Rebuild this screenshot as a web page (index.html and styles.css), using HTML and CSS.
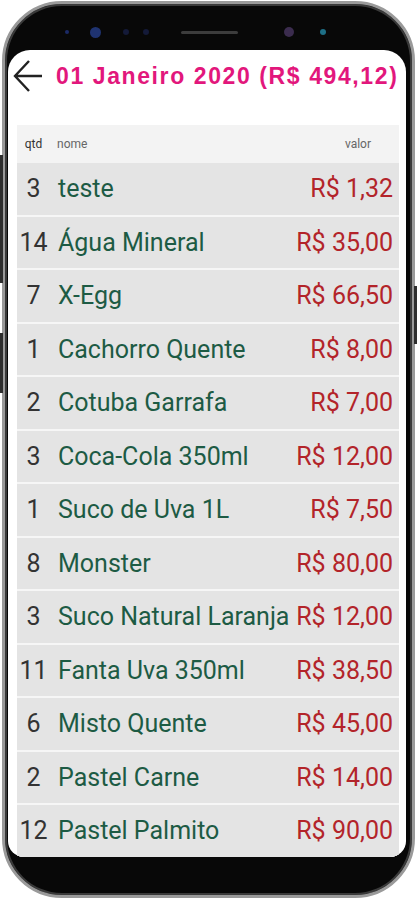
FILE: index.html
```html
<!DOCTYPE html>
<html lang="pt-BR">
<head>
  <meta charset="UTF-8" />
  <meta name="viewport" content="width=device-width, initial-scale=1.0"/>
  <title>01 Janeiro 2020</title>
  <link rel="stylesheet" href="styles.css">
</head>
<body>
  <div class="phone">
    <span class="side-btn left-top"></span>
    <span class="side-btn left-bottom"></span>
    <span class="side-btn right"></span>

    <div class="sensors">
      <span class="dot tiny"></span>
      <span class="dot cam"></span>
      <span class="dot small"></span>
      <span class="dot small second"></span>
      <span class="speaker"></span>
      <span class="dot cam2"></span>
      <span class="dot teal"></span>
    </div>

    <div class="screen">
      <div class="topbar">
        <svg class="back" width="30" height="32" viewBox="0 0 30 32">
          <path d="M29 16H2M16 1L2 16L16 31" fill="none" stroke="#222" stroke-width="2.4"/>
        </svg>
        <h1>01 Janeiro 2020 (R$ 494,12)</h1>
      </div>

      <div class="table">
        <div class="head">
          <span class="qtd">qtd</span>
          <span class="nome">nome</span>
          <span class="valor">valor</span>
        </div>
        <div class="row"><span class="qtd">3</span><span class="nome">teste</span><span class="valor">R$ 1,32</span></div>
        <div class="row"><span class="qtd">14</span><span class="nome">Água Mineral</span><span class="valor">R$ 35,00</span></div>
        <div class="row"><span class="qtd">7</span><span class="nome">X-Egg</span><span class="valor">R$ 66,50</span></div>
        <div class="row"><span class="qtd">1</span><span class="nome">Cachorro Quente</span><span class="valor">R$ 8,00</span></div>
        <div class="row"><span class="qtd">2</span><span class="nome">Cotuba Garrafa</span><span class="valor">R$ 7,00</span></div>
        <div class="row"><span class="qtd">3</span><span class="nome">Coca-Cola 350ml</span><span class="valor">R$ 12,00</span></div>
        <div class="row"><span class="qtd">1</span><span class="nome">Suco de Uva 1L</span><span class="valor">R$ 7,50</span></div>
        <div class="row"><span class="qtd">8</span><span class="nome">Monster</span><span class="valor">R$ 80,00</span></div>
        <div class="row"><span class="qtd">3</span><span class="nome">Suco Natural Laranja</span><span class="valor">R$ 12,00</span></div>
        <div class="row"><span class="qtd">11</span><span class="nome">Fanta Uva 350ml</span><span class="valor">R$ 38,50</span></div>
        <div class="row"><span class="qtd">6</span><span class="nome">Misto Quente</span><span class="valor">R$ 45,00</span></div>
        <div class="row"><span class="qtd">2</span><span class="nome">Pastel Carne</span><span class="valor">R$ 14,00</span></div>
        <div class="row"><span class="qtd">12</span><span class="nome">Pastel Palmito</span><span class="valor">R$ 90,00</span></div>
      </div>
    </div>
  </div>
</body>
</html>
```

FILE: styles.css
```css
body {
  margin: 0;
  background: #fff;
  font-family: Roboto, "Liberation Sans", sans-serif;
}
.phone {
  position: relative;
  box-sizing: border-box;
  width: 413px;
  height: 897px;
  margin: 1px 2px;
  border: 3px solid #9a9a9a;
  border-radius: 60px;
  background: #080808;
  box-shadow: inset 0 0 0 2px #3a3a3a;
  padding: 0 6px 38px 3px;
  display: flex;
  flex-direction: column;
}
.side-btn {
  position: absolute;
  width: 4px;
  background: #2e2e2e;
}
.left-top {
  left: -6px;
  top: 151px;
  height: 128px;
}
.left-bottom {
  left: -6px;
  top: 329px;
  height: 60px;
}
.right {
  right: -6px;
  top: 282px;
  height: 58px;
}
.sensors {
  height: 36px;
  padding-top: 10px;
  display: flex;
  align-items: center;
}
.dot {
  border-radius: 50%;
}
.tiny {
  width: 4px;
  height: 4px;
  margin-left: 57px;
  background: #1b2a66;
}
.cam {
  width: 11px;
  height: 11px;
  margin-left: 21px;
  background: #1f3370;
}
.small {
  width: 6px;
  height: 6px;
  margin-left: 22px;
  background: #141a38;
}
.small.second {
  margin-left: 14px;
}
.speaker {
  width: 57px;
  height: 3px;
  margin-left: 32px;
  border-radius: 2px;
  background: #3c3c3c;
}
.cam2 {
  width: 10px;
  height: 10px;
  margin-left: 46px;
  background: #3b2c4e;
}
.teal {
  width: 6px;
  height: 6px;
  margin-left: 26px;
  background: #1e6f86;
}
.screen {
  flex: 1;
  background: #fff;
  border-radius: 22px 22px 16px 16px;
  overflow: hidden;
  display: flex;
  flex-direction: column;
}
.topbar {
  height: 52px;
  display: flex;
  align-items: center;
  padding-left: 5px;
}
.back {
  flex-shrink: 0;
}
h1 {
  margin: 0 0 0 13px;
  font-family: "Liberation Sans", Arial, sans-serif;
  font-size: 23px;
  font-weight: bold;
  letter-spacing: 1.6px;
  color: #e2177c;
  white-space: nowrap;
}
.table {
  margin: 23px 7px 0 9px;
  background: #f6f6f6;
  display: flex;
  flex-direction: column;
  gap: 2px;
}
.head, .row {
  display: grid;
  grid-template-columns: 33px 1fr auto;
  align-items: center;
}
.head {
  height: 38px;
  background: #f3f3f3;
  font-size: 12px;
  color: #666;
  margin-bottom: -2px;
}
.head .nome {
  padding-left: 7px;
}
.head .valor {
  padding-right: 28px;
}
.row {
  height: 51.5px;
  background: #e4e4e4;
  font-size: 25px;
  white-space: nowrap;
}
.qtd {
  text-align: center;
  color: #333;
}
.row .nome {
  padding-left: 8px;
  color: #1d5b44;
}
.row .valor {
  padding-right: 6px;
  color: #b3242a;
}
```
